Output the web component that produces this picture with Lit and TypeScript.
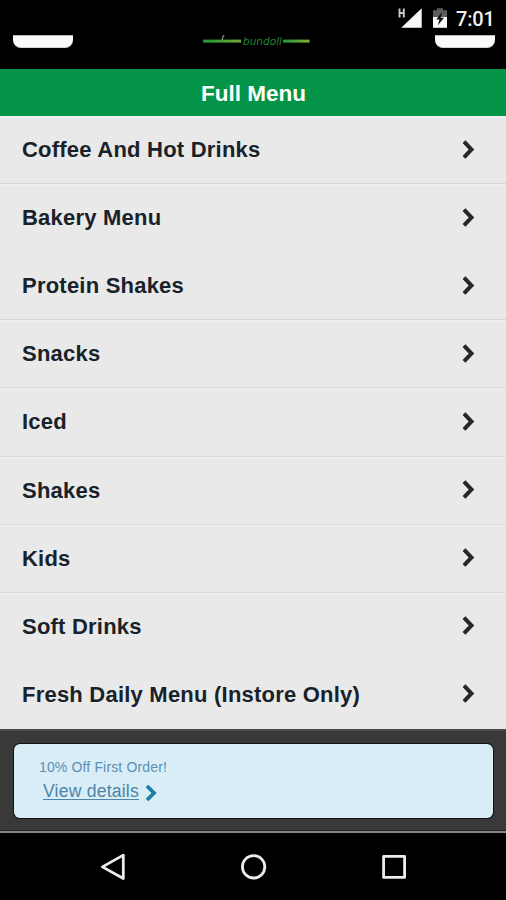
import { LitElement, html, css, svg } from "lit";
import { customElement } from "lit/decorators.js";

interface MenuItem {
  label: string;
  divider: boolean;
}

const MENU: MenuItem[] = [
  { label: "Coffee And Hot Drinks", divider: true },
  { label: "Bakery Menu", divider: false },
  { label: "Protein Shakes", divider: true },
  { label: "Snacks", divider: true },
  { label: "Iced", divider: true },
  { label: "Shakes", divider: true },
  { label: "Kids", divider: true },
  { label: "Soft Drinks", divider: false },
  { label: "Fresh Daily Menu (Instore Only)", divider: false },
];

@customElement("status-bar")
class StatusBar extends LitElement {
  static styles = css`
    :host {
      display: flex;
      justify-content: flex-end;
      align-items: flex-start;
      height: 35px;
      background: #000;
    }
    .icons {
      display: block;
    }
    .clock {
      width: 40px;
      margin: 6px 10px 0 8px;
      color: #f0f0f0;
      font: 500 20px/27px Roboto, "Liberation Sans", sans-serif;
      letter-spacing: -0.2px;
      white-space: nowrap;
    }
  `;
  render() {
    return html`
      <svg class="icons" width="54" height="35" viewBox="394 0 54 35">
        <path d="M399.5 8.5v9M403.8 8.5v9M399.5 13h4.3" stroke="#c8c8c8" stroke-width="1.9" fill="none" />
        <path d="M421.7 8.3v19.5h-20.5z" fill="#fafafa" />
        <path d="M433 17.5v-7.3h4v-2h6v2h4v7.3z" fill="#5c5c5c" />
        <path d="M433 17h14v10.8h-14z" fill="#fafafa" />
        <path d="M442.2 12l-6 7.6h3.2l-1.4 5.6 6-7.4h-3.3z" fill="#111" />
      </svg>
      <div class="clock">7:01</div>
    `;
  }
}

@customElement("brand-bar")
class BrandBar extends LitElement {
  static styles = css`
    :host {
      display: flex;
      justify-content: space-between;
      height: 34px;
      padding: 0 11px 0 13px;
      background: #000;
    }
    .tab {
      box-sizing: border-box;
      width: 60px;
      height: 13px;
      background: #fafafa;
      border-top: 1px solid #b9b9b9;
      border-bottom: 1px solid #d2d2d2;
      border-radius: 0 0 8px 8px;
    }
    .logo {
      display: block;
      width: 112px;
      height: 16px;
    }
    .word {
      font: italic 11px "DejaVu Sans", sans-serif;
    }
  `;
  render() {
    return html`
      <div class="tab"></div>
      <svg class="logo" viewBox="198 35 112 16">
        <defs>
          <linearGradient id="bar" gradientUnits="userSpaceOnUse" x1="203" x2="241" y1="0" y2="0">
            <stop offset="0" stop-color="#1d9838" />
            <stop offset="1" stop-color="#75a533" />
          </linearGradient>
          <linearGradient id="bar2" gradientUnits="userSpaceOnUse" x1="283" x2="310" y1="0" y2="0">
            <stop offset="0" stop-color="#249a35" />
            <stop offset="1" stop-color="#83aa35" />
          </linearGradient>
        </defs>
        ${svg`
          <rect x="203" y="39.6" width="38" height="3" fill="url(#bar)" />
          <rect x="283" y="39.6" width="26.5" height="3" fill="url(#bar2)" />
          <path d="M222.3 40c0-2.5.3-4 2-4.8" stroke="#8c8c8c" stroke-width="1.3" fill="none" />
          <text class="word" x="243" y="44.8" textLength="39" lengthAdjust="spacingAndGlyphs" fill="#1f8434">bundoll</text>
        `}
      </svg>
      <div class="tab"></div>
    `;
  }
}

@customElement("menu-list")
class MenuList extends LitElement {
  static styles = css`
    :host {
      display: flex;
      flex-direction: column;
      height: 613px;
      background: #e9e9e9;
      box-shadow: inset 0 2px 0 #f4f1f3;
    }
    .row {
      box-sizing: border-box;
      display: flex;
      flex: 1;
      justify-content: space-between;
      align-items: center;
      padding: 1px 31px 0 22px;
      color: #18222a;
      font: bold 22px/26px "Liberation Sans", Arial, sans-serif;
      letter-spacing: 0.22px;
      border-bottom: 1px solid transparent;
    }
    .ruled {
      border-bottom-color: #d6d6d6;
      box-shadow: 0 1px 0 #efefef;
    }
    .chevron {
      display: block;
      margin-top: -1px;
    }
  `;
  render() {
    return html`${MENU.map(
      (item) => html`
        <div class="row ${item.divider ? "ruled" : ""}">
          <span>${item.label}</span>
          <svg class="chevron" width="14" height="22" viewBox="0 0 14 22">
            <path d="M3 2.7L10.5 10.5 3 18.3" fill="none" stroke="#272727" stroke-width="4" />
          </svg>
        </div>
      `
    )}`;
  }
}

@customElement("offer-footer")
class OfferFooter extends LitElement {
  static styles = css`
    :host {
      display: block;
      box-sizing: border-box;
      height: 104px;
      padding: 13px 13px 0 14px;
      background: #393939;
      border-top: 2px solid #4a4a4a;
      border-bottom: 2px solid #858585;
      box-shadow: inset 0 -1px 0 #222;
      font-family: "Liberation Sans", Arial, sans-serif;
    }
    .card {
      box-sizing: border-box;
      height: 74px;
      padding: 15px 0 0 25px;
      border-radius: 6px;
      background: #d9edf7;
      box-shadow: 0 0 0 1px #111;
    }
    .title {
      color: #5c8fb4;
      font-size: 14px;
      line-height: 17px;
      letter-spacing: 0.15px;
    }
    .details {
      display: flex;
      align-items: flex-start;
      gap: 5px;
      padding: 5px 0 0 4px;
    }
    .link {
      color: #4d85aa;
      font-size: 17.6px;
      line-height: 20px;
      letter-spacing: 0.2px;
      text-decoration: underline;
      text-decoration-thickness: 1px;
      text-underline-offset: 2px;
    }
    .arrow {
      display: block;
      margin-top: 3px;
    }
  `;
  render() {
    return html`
      <div class="card">
        <div class="title">10% Off First Order!</div>
        <div class="details">
          <span class="link">View details</span>
          <svg class="arrow" width="14" height="18" viewBox="0 0 14 18">
            <path d="M3 2L10 9 3 16" fill="none" stroke="#1d7fa5" stroke-width="3.8" />
          </svg>
        </div>
      </div>
    `;
  }
}

@customElement("nav-bar")
class NavBar extends LitElement {
  static styles = css`
    :host {
      display: flex;
      justify-content: space-between;
      align-items: center;
      height: 67px;
      padding: 0 98px 0 99px;
      background: #000;
    }
    .key {
      display: block;
      fill: none;
      stroke: #ededed;
      stroke-width: 2.8;
      stroke-linejoin: round;
    }
  `;
  render() {
    return html`
      <svg class="key" width="28" height="30" viewBox="0 0 28 30">
        <path d="M24.3 3.1v23.4L3.4 14.9z" />
      </svg>
      <svg class="key" width="28" height="30" viewBox="0 0 28 30">
        <circle cx="13.6" cy="14.8" r="11.2" />
      </svg>
      <svg class="key" width="28" height="30" viewBox="0 0 28 30">
        <rect x="3.6" y="4.4" width="21" height="21" />
      </svg>
    `;
  }
}

@customElement("app-root")
class AppRoot extends LitElement {
  static styles = css`
    :host {
      display: flex;
      flex-direction: column;
      width: 506px;
      height: 900px;
      overflow: hidden;
      background: #000;
    }
    .heading {
      height: 47px;
      padding: 1px 0 0 1px;
      box-sizing: border-box;
      margin: 0;
      background: #039447;
      color: #fff;
      text-align: center;
      font: bold 22.5px/48px "Liberation Sans", Arial, sans-serif;
    }
  `;
  render() {
    return html`
      <status-bar></status-bar>
      <brand-bar></brand-bar>
      <h1 class="heading">Full Menu</h1>
      <menu-list></menu-list>
      <offer-footer></offer-footer>
      <nav-bar></nav-bar>
    `;
  }
}
